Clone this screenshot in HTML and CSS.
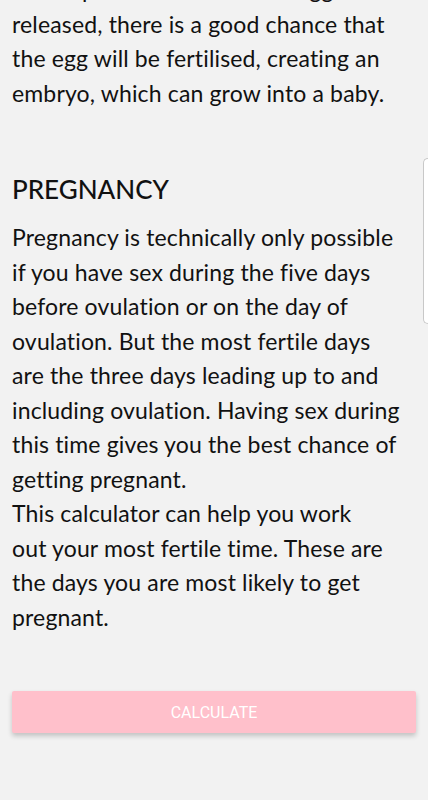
FILE: index.html
```html
<!DOCTYPE html>
<html>
  <head>
    <title>Fertility</title>
    <link rel="stylesheet" href="styles.css">
  </head>
  <body>
    <main class="page">
      <p class="text intro">
        If the sperm is there and an egg is<br>
        released, there is a good chance that<br>
        the egg will be fertilised, creating an<br>
        embryo, which can grow into a baby.
      </p>

      <h2 class="title">PREGNANCY</h2>
      <p class="text">
        Pregnancy is technically only possible<br>
        if you have sex during the five days<br>
        before ovulation or on the day of<br>
        ovulation. But the most fertile days<br>
        are the three days leading up to and<br>
        including ovulation. Having sex during<br>
        this time gives you the best chance of<br>
        getting pregnant.<br>
        This calculator can help you work<br>
        out your most fertile time. These are<br>
        the days you are most likely to get<br>
        pregnant.
      </p>

      <button class="calc">CALCULATE</button>
    </main>

    <div class="edge-handle"></div>
  </body>
</html>
```

FILE: styles.css
```css
body {
    margin: 0;
    padding: 0;
    width: 428px;
    height: 800px;
    overflow: hidden;
    background: #f2f2f2;
    color: #111;
    font-family: Lato, "Noto Sans", sans-serif;
    font-variant-ligatures: none;
}

.page {
    margin-top: -28px;
    padding: 0 12px 0 12px;
}

.text {
    margin: 0;
    font-size: 23px;
    line-height: 34.5px;
    letter-spacing: 0.15px;
}

.intro {
    margin-bottom: 62px;
}

.title {
    margin: 0 0 14px 0;
    font-size: 26px;
    line-height: 34px;
    font-weight: 500;
}

.calc {
    display: block;
    width: 100%;
    height: 42px;
    margin-top: 57px;
    border: none;
    border-radius: 2px;
    background: #ffc0cb;
    color: #fff;
    font-family: Roboto, sans-serif;
    font-size: 16px;
    box-shadow: 0 3px 5px rgba(0, 0, 0, 0.2);
}

.edge-handle {
    position: absolute;
    top: 158px;
    right: 0;
    width: 4px;
    height: 164px;
    background: #fff;
    border: 1px solid #c8c8c8;
    border-right: none;
    border-radius: 6px 0 0 6px;
}
```
